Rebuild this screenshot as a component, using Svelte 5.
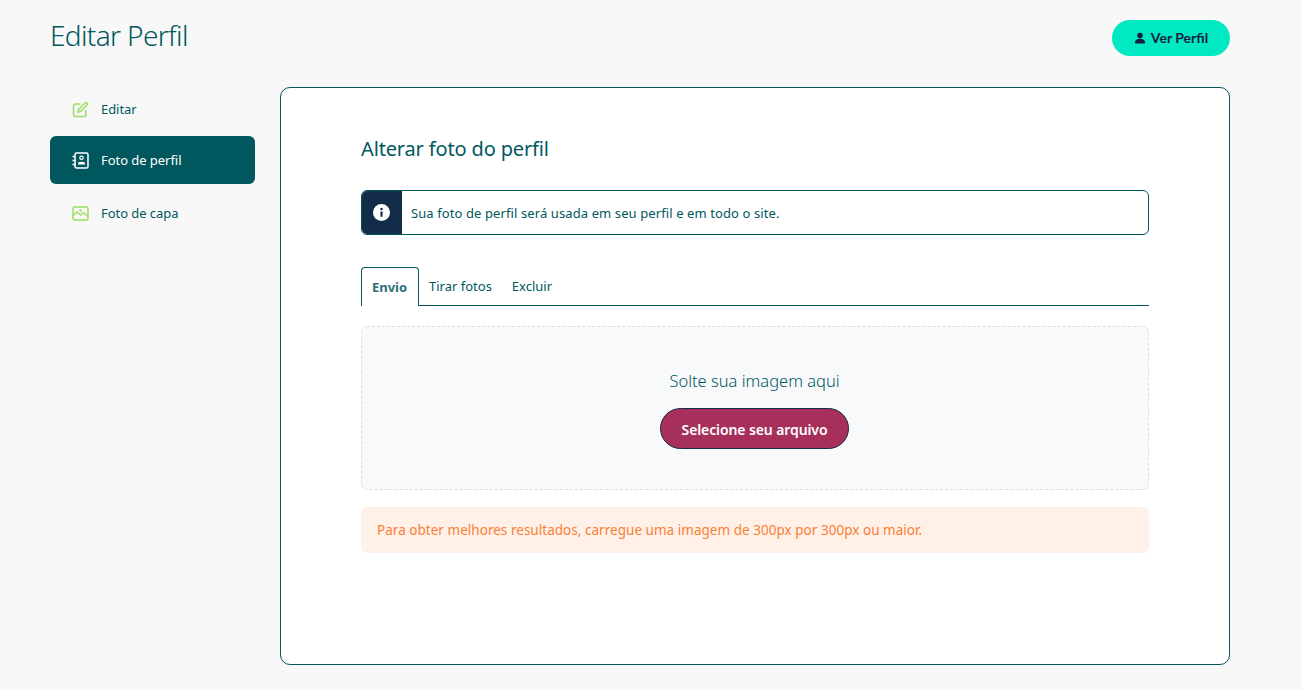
<script>
  const tabs = ['Tirar fotos', 'Excluir'];
</script>

<div class="page">
  <header class="top">
    <h1>Editar Perfil</h1>
    <button class="view">
      <svg width="12" height="12" viewBox="0 0 24 24" fill="#14213d"><circle cx="12" cy="7" r="5.500"/><path d="M2 23v-3c0-4 4-6.500 10-6.500S22 16 22 20v3z"/></svg>
      <span class="view-label">Ver Perfil</span>
    </button>
  </header>
  <div class="body">
    <nav class="side">
      <a class="item">
        <svg class="ic" width="17" height="17" viewBox="0 0 17 17" fill="none" stroke="#9ade62" stroke-width="1.500">
          <path d="M8.500 3H3.500a2 2 0 0 0-2 2V13.500a2 2 0 0 0 2 2h8.500a2 2 0 0 0 2-2V9"/>
          <path d="M6 11.200l.6-2.800 6.400-6.400a1.400 1.400 0 0 1 2 2L8.600 10.400z"/>
        </svg>
        Editar
      </a>
      <a class="item active">
        <svg class="ic" width="17" height="17" viewBox="0 0 17 17" fill="none" stroke="#fff" stroke-width="1.500">
          <rect x="3" y="1" width="13" height="15" rx="1.500"/>
          <path d="M.5 4.500h3M.5 8.500h3M.5 12.500h3"/>
          <circle cx="9.500" cy="5.800" r="1.700" fill="none" stroke-width="1.200"/>
          <path d="M6 12.500v-1c0-1 1-1.800 3.500-1.800s3.500.8 3.500 1.800v1z" fill="#fff" stroke="none"/>
        </svg>
        Foto de perfil
      </a>
      <a class="item third">
        <svg class="ic" width="17" height="15" viewBox="0 0 17 15" fill="none" stroke="#9ade62" stroke-width="1.500">
          <rect x="1" y="1" width="15" height="13" rx="2"/>
          <path d="M1 10l4-4 3.500 3 3-2.500 4.500 4" stroke-width="1.300"/>
          <circle cx="8.500" cy="4.500" r="1.300" fill="#9ade62" stroke="none"/>
        </svg>
        Foto de capa
      </a>
    </nav>
    <main class="card">
      <h2>Alterar foto do perfil</h2>
      <div class="info">
        <span class="info-ic">
          <svg class="info-svg" width="17" height="17" viewBox="0 0 16 16"><circle cx="8" cy="8" r="8" fill="#fff"/><rect x="7" y="7" width="2" height="5" fill="#132c49"/><circle cx="8" cy="4.700" r="1.200" fill="#132c49"/></svg>
        </span>
        <p>Sua foto de perfil será usada em seu perfil e em todo o site.</p>
      </div>
      <div class="tabs">
        <span class="tab on">Envio</span>
        {#each tabs as t}<span class="tab">{t}</span>{/each}
      </div>
      <div class="drop">
        <p>Solte sua imagem aqui</p>
        <button class="pick">Selecione seu arquivo</button>
      </div>
      <div class="note">Para obter melhores resultados, carregue uma imagem de 300px por 300px ou maior.</div>
    </main>
  </div>
</div>

<style>
  :global(body) { margin: 0; background: #f8f8f8; }
  .page { height: 690px; box-sizing: border-box; padding: 20px 72px 0 50px; font-family: "Noto Sans", sans-serif; color: #00585e; overflow: hidden; }
  .top { display: flex; justify-content: space-between; align-items: flex-start; height: 67px; }
  h1 { margin: -1px 0 0; font-size: 28px; font-weight: 300; line-height: 33px; letter-spacing: -0.65px; }
  .view { display: flex; align-items: center; justify-content: center; gap: 5px; width: 118px; height: 36px; border: 0; border-radius: 18px; background: #00e9c2; color: #14213d; font: 700 14px Lato, sans-serif; }
  .view-label { margin-top: -2px; }
  .body { display: flex; gap: 25px; align-items: flex-start; }
  .side { width: 205px; display: flex; flex-direction: column; gap: 3px; margin-top: -2px; }
  .item { display: flex; align-items: center; height: 48px; padding-left: 22px; border-radius: 6px; font-size: 13px; gap: 12px; letter-spacing: -0.05px; }
  .ic { width: 17px; flex: none; }
  .active { background: #00585e; color: #fff; }
  .third { margin-top: 2px; }
  .card { flex: 1; height: 578px; box-sizing: border-box; background: #fff; border: 1px solid #00585e; border-radius: 10px; padding: 46px 80px 0; }
  h2 { margin: 0 0 27px; font-size: 20px; font-weight: 400; line-height: 29px; letter-spacing: -0.15px; }
  .info { display: flex; height: 45px; box-sizing: border-box; border: 1px solid #00585e; border-radius: 6px; overflow: hidden; align-items: center; }
  .info-ic { width: 40px; height: 100%; background: #132c49; display: flex; align-items: center; justify-content: center; flex: none; }
  .info-svg { margin-right: 2px; }
  .info p { margin: 0 0 0 9px; font-size: 13px; letter-spacing: 0.1px; }
  .tabs { display: flex; margin-top: 32px; height: 39px; box-sizing: border-box; border-bottom: 1px solid #00585e; align-items: flex-end; }
  .tab { font-size: 13px; padding: 0 10px; height: 39px; line-height: 40px; box-sizing: border-box; }
  .on { border: 1px solid #00585e; border-bottom: 0; border-radius: 4px 4px 0 0; background: #fff; font-weight: 700; color: #2c7079; height: 39px; margin-bottom: -1px; line-height: 38px; width: 58px; text-align: center; padding: 0 1px 0 0; }
  .drop { margin-top: 20px; height: 164px; box-sizing: border-box; background: #f8f9fb; border: 1px dashed #dcdfe3; border-radius: 6px; display: flex; flex-direction: column; align-items: center; }
  .drop p { margin: 42px 1px 15px 0; font-size: 16.500px; line-height: 24px; font-weight: 300; }
  .pick { width: 189px; height: 41px; margin-right: 1px; padding: 2px 0 0; border-radius: 21px; border: 1px solid #132c49; background: #a62f5b; color: #fff; font: 600 14px "Noto Sans", sans-serif; letter-spacing: -0.1px; }
  .note { margin-top: 17px; height: 46px; line-height: 46px; padding-left: 16px; border-radius: 6px; background: #fff1e8; color: #f97f35; font-size: 13.500px; letter-spacing: 0.03px; }
</style>
